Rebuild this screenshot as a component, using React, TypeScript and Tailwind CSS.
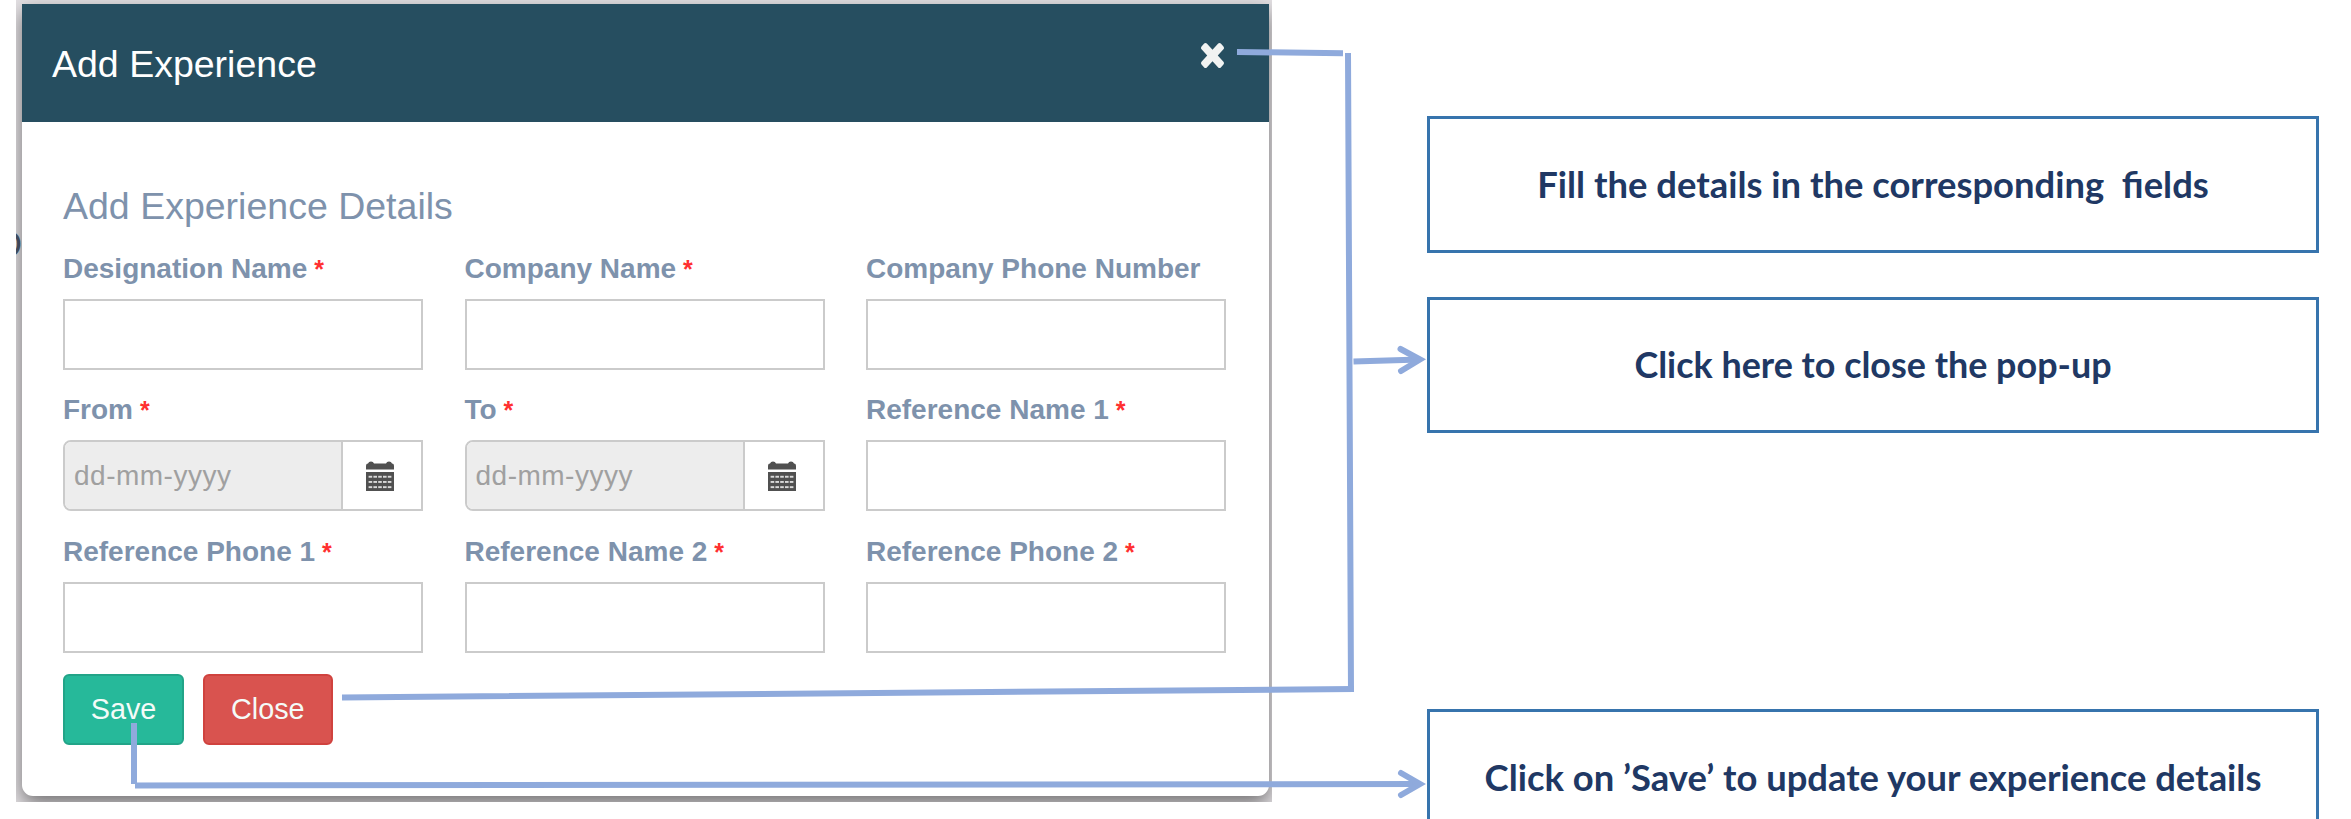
type FieldSpec = { label: string; required?: boolean; date?: boolean };

const fields: FieldSpec[] = [
  { label: "Designation Name", required: true },
  { label: "Company Name", required: true },
  { label: "Company Phone Number" },
  { label: "From", required: true, date: true },
  { label: "To", required: true, date: true },
  { label: "Reference Name 1", required: true },
  { label: "Reference Phone 1", required: true },
  { label: "Reference Name 2", required: true },
  { label: "Reference Phone 2", required: true },
];

function CloseIcon() {
  return (
    <svg className="h-[25px] w-[23px]" viewBox="110 366 1188 1188" preserveAspectRatio="none" fill="#f1f3f2">
      <path d="M1298 1322q0 40-28 68l-136 136q-28 28-68 28t-68-28l-294-294-294 294q-28 28-68 28t-68-28l-136-136q-28-28-28-68t28-68l294-294-294-294q-28-28-28-68t28-68l136-136q28-28 68-28t68 28l294 294 294-294q28-28 68-28t68 28l136 136q28 28 28 68t-28 68l-294 294 294 294q28 28 28 68z" />
    </svg>
  );
}

function CalendarIcon() {
  const rows = [14.8, 20, 25.2];
  const cols = [2.6, 7.4, 12.2, 17, 21.8];
  return (
    <svg className="h-[30px] w-[28px]" viewBox="0 0 28 30">
      <path
        fill="#505050"
        d="M0 8.500V4.800q0-2.300 2-2.300Q2.700.5 5 .5T8 2.500h12Q20.700.5 23 .5T26 2.500q2 0 2 2.300v3.700z"
      />
      <path fill="#505050" d="M0 11h28v19H0z" />
      {rows.map((y) =>
        cols.map((x) => <rect key={`${x}-${y}`} x={x} y={y} width="3.6" height="1.9" fill="#d9d9d9" />),
      )}
    </svg>
  );
}

function Field({ label, required, date }: FieldSpec) {
  return (
    <div className="flex h-[141.700px] flex-col">
      <label className="h-[47px] pt-px text-[28px] leading-[32px] font-bold whitespace-nowrap text-[#7e92ac]">
        {label}
        {required && <span className="text-[25px] text-[#ff3030]"> *</span>}
      </label>
      {date ? (
        <div className="flex h-[71px] w-[360px] rounded-l-[8px] border-2 border-[#cbcbcb]">
          <div className="flex w-[276px] items-center rounded-l-[6px] bg-[#ededed] pl-[9px] text-[28px] tracking-[0.500px] text-[#a0a0a0]">
            dd-mm-yyyy
          </div>
          <div className="flex flex-1 items-center border-l-2 border-[#cbcbcb] pl-[23px]">
            <CalendarIcon />
          </div>
        </div>
      ) : (
        <div className="h-[71px] w-[360px] border-2 border-[#cbcbcb] bg-white" />
      )}
    </div>
  );
}

function Callout({ children, className }: { children: string; className: string }) {
  return (
    <div
      className={
        "flex w-[892px] shrink-0 items-center justify-center border-[3px] border-[#3774ad] bg-white pb-[1px] font-[Lato] font-bold whitespace-pre text-[#203864] " +
        className
      }
    >
      {children}
    </div>
  );
}

export default function App() {
  return (
    <main className="relative flex h-[819px] w-[2351px] overflow-hidden bg-white font-['Liberation_Sans',sans-serif]">
      <div className="relative ml-[16px] h-[802px] w-[1256px] shrink-0 overflow-hidden bg-[#e4e1e4] pt-[4px] pl-[6px]">
        <span className="absolute top-[224px] -left-[20px] text-[36px] leading-[42px] text-[#4c586b]">D</span>
        <section className="relative h-[792px] w-[1246.500px] rounded-b-[11px] bg-white shadow-[0_8px_20px_rgba(0,0,0,0.5)]">
          <header className="flex h-[117.500px] justify-between bg-[#264e60] pr-[45px] pl-[30px]">
            <h1 className="pt-[39px] text-[37.500px] leading-[42px] text-white">Add Experience</h1>
            <div className="pt-[38.500px]">
              <CloseIcon />
            </div>
          </header>
          <div className="pt-[63px] pl-[41px]">
            <h2 className="text-[37.500px] leading-[42px] text-[#7e92ac]">Add Experience Details</h2>
            <div className="mt-[25px] grid grid-cols-[401.500px_401.500px_360px]">
              {fields.map((f) => (
                <Field key={f.label} {...f} />
              ))}
            </div>
            <div className="-mt-[3px] flex gap-[19px] text-[28.800px] text-[#f4fbf8]">
              <button className="h-[71px] w-[121px] rounded-[6px] border-2 border-[#22a488] bg-[#26b99a] pt-[2px]">
                Save
              </button>
              <button className="h-[71px] w-[129.500px] rounded-[6px] border-2 border-[#d0423e] bg-[#d9534f] pt-[2px]">
                Close
              </button>
            </div>
          </div>
        </section>
      </div>
      <aside className="ml-[155px] flex flex-col">
        <Callout className="mt-[116px] h-[137px] text-[36.400px]">Fill the details in the corresponding  fields</Callout>
        <Callout className="mt-[44px] h-[136px] text-[35.900px]">Click here to close the pop-up</Callout>
        <Callout className="mt-[276px] h-[137px] text-[36.400px]">
          Click on ’Save’ to update your experience details
        </Callout>
      </aside>
      <svg className="absolute inset-0" width="2351" height="819" fill="none" stroke="#8faadc" strokeWidth="6">
        <path d="M1237 52 1343 53.200M1348 53 1351 692M342 697.500 1354 689" />
        <path d="M1353.500 361.500 1420 359.500M134 723V784M135 785.500 1420 784" />
        <path d="M1400.500 349 1420 359.500 1401 371M1401 773 1420 784 1401 795" strokeLinecap="round" />
      </svg>
    </main>
  );
}
